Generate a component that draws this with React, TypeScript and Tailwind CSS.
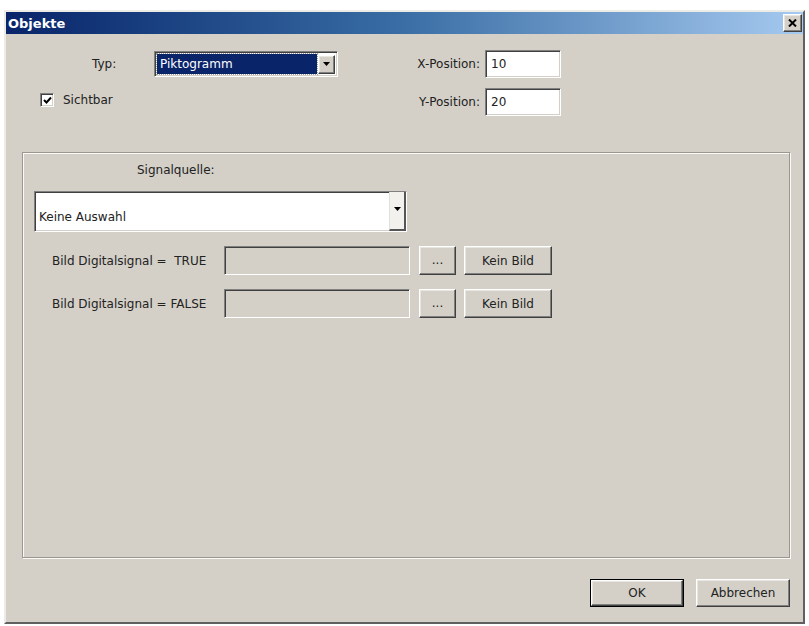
import React from "react";

const font = { fontFamily: '"DejaVu Sans", "Liberation Sans", sans-serif' };

const raised =
  "border border-t-white border-l-white border-r-[#404040] border-b-[#404040] shadow-[inset_-1px_-1px_#808080,inset_1px_1px_#e8e6e0] bg-[#d4d0c8]";
const sunken =
  "border border-t-[#808080] border-l-[#808080] border-r-white border-b-white shadow-[inset_1px_1px_#404040,inset_-1px_-1px_#d4d0c8]";

function Arrow() {
  return (
    <svg width="7" height="4" viewBox="0 0 7 4">
      <path d="M0 0h7L3.5 4z" fill="#000" />
    </svg>
  );
}

function Btn({ children, className = "" }: { children: React.ReactNode; className?: string }) {
  return (
    <div className={`${raised} flex items-center justify-center text-[12px] text-[#222] ${className}`}>
      {children}
    </div>
  );
}

export default function App() {
  return (
    <div className="w-[809px] h-[626px] bg-white pt-[10px] pl-[4px] overflow-hidden" style={font}>
      <div className="w-[801px] h-[614px] bg-[#d4d0c8] border-2 border-t-[#ecebe6] border-l-[#ecebe6] border-r-[#606060] border-b-[#606060] flex flex-col">
        {/* Title bar */}
        <div className="h-[22px] flex items-center justify-between bg-gradient-to-r from-[#0a246a] via-[#3a6ea5] to-[#a6caf0] pl-[2px] pr-[1px]">
          <span className="text-white font-bold text-[13px] leading-none">Objekte</span>
          <div className={`${raised} w-[19px] h-[18px] flex items-center justify-center`}>
            <svg width="9" height="8" viewBox="0 0 9 8">
              <path d="M1 0.5L8 7.5M8 0.5L1 7.5" stroke="#000" strokeWidth="2" />
            </svg>
          </div>
        </div>

        {/* Row 1 */}
        <div className="mt-[16px] flex items-center h-[28px] text-[12px] text-[#222]">
          <div className="w-[479px] flex items-center pl-[86px]">
            <span className="w-[62px]">Typ:</span>
            <div className={`${sunken} w-[184px] h-[26px] bg-white flex items-center pl-[2px] pr-[2px]`}>
              <div className="flex-1 h-[20px] bg-[#0a246a] text-white flex items-center pl-[3px] outline outline-1 outline-dotted outline-[#a0a0a0]">
                Piktogramm
              </div>
              <div className={`${raised} w-[17px] h-[19px] ml-[1px] flex items-center justify-center`}>
                <Arrow />
              </div>
            </div>
            <span className="flex-1 text-right pr-[5px]">X-Position:</span>
          </div>
          <div className={`${sunken} w-[76px] h-[28px] bg-white flex items-center pl-[5px]`}>10</div>
        </div>

        {/* Row 2 */}
        <div className="mt-[10px] flex items-center h-[28px] text-[12px] text-[#222]">
          <div className="w-[479px] flex items-center pl-[34px]">
            <div className={`${sunken} w-[14px] h-[14px] bg-white flex items-center justify-center -mt-[4px]`}>
              <svg width="9" height="9" viewBox="0 0 9 9">
                <path d="M1 4l2.5 2.5L8 1.5" stroke="#000" strokeWidth="2" fill="none" />
              </svg>
            </div>
            <span className="ml-[9px] -mt-[4px]">Sichtbar</span>
            <span className="flex-1 text-right pr-[5px]">Y-Position:</span>
          </div>
          <div className={`${sunken} w-[76px] h-[28px] bg-white flex items-center pl-[5px]`}>20</div>
        </div>

        {/* Group */}
        <div className="mt-[36px] ml-[16px] w-[768px] h-[406px] border border-[#9a978f] shadow-[inset_1px_1px_#fbfaf7,1px_1px_#fbfaf7] flex flex-col text-[12px] text-[#222]">
          <div className="pt-[10px] pl-[114px] leading-[15px]">Signalquelle:</div>
          <div className={`${sunken} mt-[13px] ml-[11px] w-[373px] h-[41px] bg-white flex`}>
            <div className="flex-1 flex items-end pb-[5px] pl-[4px]">Keine Auswahl</div>
            <div className="w-[17px] border-l border-[#e0e0e0] bg-[#f2f1ed] border-r-2 border-r-[#555] border-b-2 border-b-[#555] flex items-start justify-center pt-[15px]">
              <Arrow />
            </div>
          </div>
          {[
            ["Bild Digitalsignal =  TRUE", "mt-[14px]"],
            ["Bild Digitalsignal = FALSE", "mt-[14px]"],
          ].map(([label, mt]) => (
            <div key={label} className={`${mt} flex items-center h-[29px] pl-[29px]`}>
              <span className="w-[172px] whitespace-pre">{label}</span>
              <div className={`${sunken} w-[186px] h-[29px] bg-[#d4d0c8]`} />
              <Btn className="ml-[9px] w-[37px] h-[29px]">
                <span className="-mt-[2px]">...</span>
              </Btn>
              <Btn className="ml-[8px] w-[88px] h-[29px]">Kein Bild</Btn>
            </div>
          ))}
        </div>

        {/* Buttons */}
        <div className="mt-[21px] ml-[16px] w-[768px] flex justify-end gap-[12px]">
          <div className="w-[94px] h-[28px] border border-black">
            <Btn className="w-full h-full">OK</Btn>
          </div>
          <Btn className="w-[94px] h-[28px]">Abbrechen</Btn>
        </div>
      </div>
    </div>
  );
}
